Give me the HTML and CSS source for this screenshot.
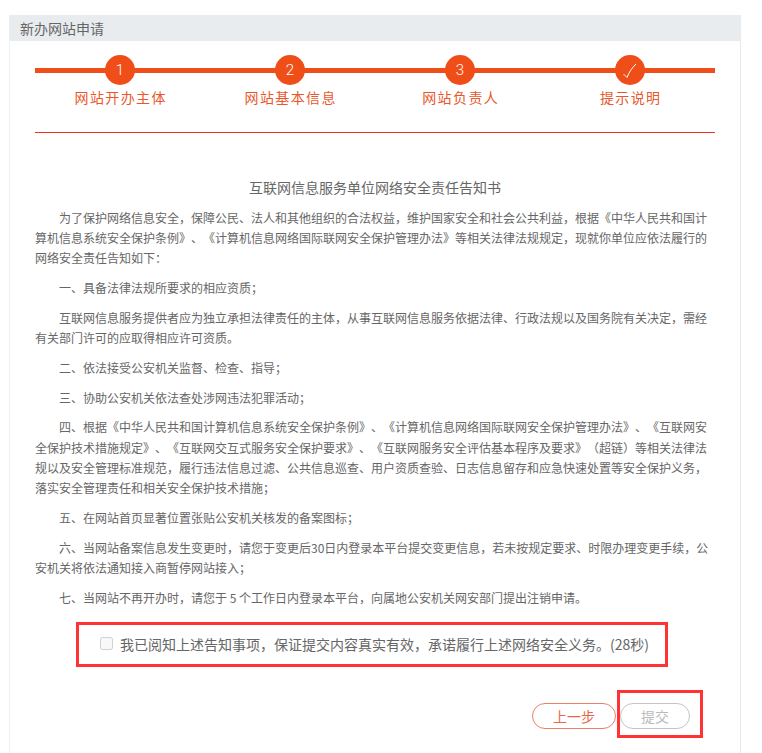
FILE: index.html
```html
<!DOCTYPE html>
<html lang="zh-CN">

<head>
    <meta charset="UTF-8">
    <title>新办网站申请</title>
    <link rel="stylesheet" href="styles.css">
</head>

<body>

    <div class="panel">
        <div class="panel-head">新办网站申请</div>
        <div class="panel-body">
            <div class="steps">
                <div class="step">
                    <span class="step-num">1</span>
                    <span class="step-label">网站开办主体</span>
                </div>
                <div class="step">
                    <span class="step-num">2</span>
                    <span class="step-label">网站基本信息</span>
                </div>
                <div class="step">
                    <span class="step-num">3</span>
                    <span class="step-label">网站负责人</span>
                </div>
                <div class="step">
                    <span class="step-num">
                        <svg width="30" height="30" viewBox="0 0 30 30" fill="none" stroke="#fff" stroke-width="1">
                            <path d="M8.5 19 L12 22.5 C14 17 17 13 21 9" />
                        </svg>
                    </span>
                    <span class="step-label">提示说明</span>
                </div>
            </div>

            <h3 class="notice-title">互联网信息服务单位网络安全责任告知书</h3>
            <div class="notice">
                <p>为了保护网络信息安全，保障公民、法人和其他组织的合法权益，维护国家安全和社会公共利益，根据《中华人民共和国计算机信息系统安全保护条例》、《计算机信息网络国际联网安全保护管理办法》等相关法律法规规定，现就你单位应依法履行的网络安全责任告知如下：</p>
                <p>一、具备法律法规所要求的相应资质；</p>
                <p>互联网信息服务提供者应为独立承担法律责任的主体，从事互联网信息服务依据法律、行政法规以及国务院有关决定，需经有关部门许可的应取得相应许可资质。</p>
                <p>二、依法接受公安机关监督、检查、指导；</p>
                <p>三、协助公安机关依法查处涉网违法犯罪活动；</p>
                <p>四、根据《中华人民共和国计算机信息系统安全保护条例》、《计算机信息网络国际联网安全保护管理办法》、《互联网安全保护技术措施规定》、《互联网交互式服务安全保护要求》、《互联网服务安全评估基本程序及要求》（超链）等相关法律法规以及安全管理标准规范，履行违法信息过滤、公共信息巡查、用户资质查验、日志信息留存和应急快速处置等安全保护义务，落实安全管理责任和相关安全保护技术措施；</p>
                <p>五、在网站首页显著位置张贴公安机关核发的备案图标；</p>
                <p>六、当网站备案信息发生变更时，请您于变更后30日内登录本平台提交变更信息，若未按规定要求、时限办理变更手续，公安机关将依法通知接入商暂停网站接入；</p>
                <p>七、当网站不再开办时，请您于 5 个工作日内登录本平台，向属地公安机关网安部门提出注销申请。</p>
            </div>

            <label class="agree">
                <input type="checkbox" disabled>
                <span>我已阅知上述告知事项，保证提交内容真实有效，承诺履行上述网络安全义务。(28秒)</span>
            </label>

            <div class="actions">
                <button type="button" class="btn btn-prev">上一步</button>
                <button type="button" class="btn btn-submit" disabled>提交</button>
                <div class="mark"></div>
            </div>
        </div>
    </div>

</body>

</html>
```

FILE: styles.css
```css
* {
    box-sizing: border-box;
}

body {
    margin: 0;
    background: #fff;
    font-family: "Noto Sans CJK SC", "Liberation Sans", sans-serif;
    color: #666;
    text-spacing-trim: space-all;
}

.panel {
    width: 732px;
    height: 738px;
    margin: 15px 0 0 9px;
    border-left: 1px solid #eef0f2;
    border-right: 1px solid #e6e9ec;
}

.panel-head {
    height: 26px;
    margin: 0 -1px;
    padding-left: 11px;
    background: #e8ecef;
    font-size: 14px;
    line-height: 27px;
    color: #666;
}

.panel-body {
    padding: 0 25px;
}

.steps {
    position: relative;
    display: grid;
    grid-template-columns: repeat(4, 170px);
    padding: 14px 0 25px;
    border-bottom: 1px solid #f0341c;
}

.steps::before {
    content: "";
    position: absolute;
    left: 0;
    right: 0;
    top: 27px;
    height: 5px;
    background: #f04e18;
}

.step {
    position: relative;
    display: flex;
    flex-direction: column;
    align-items: center;
}

.step-num {
    display: flex;
    justify-content: center;
    align-items: center;
    width: 30px;
    height: 30px;
    border-radius: 50%;
    background: #f04e18;
    color: #fff;
    font-family: Roboto, sans-serif;
    font-size: 15px;
    font-weight: 300;
}

.step-label {
    margin-top: 2px;
    padding-left: 1.4px;
    font-size: 14px;
    line-height: 20px;
    letter-spacing: 1.4px;
    color: #e8582c;
}

.notice-title {
    margin: 44px 0 0;
    font-size: 14px;
    font-weight: normal;
    line-height: 20px;
    text-align: center;
}

.notice {
    margin-top: 10.5px;
    font-size: 12px;
    line-height: 20.4px;
}

.notice p {
    margin: 0 0 9.3px;
    text-indent: 24px;
}

.agree {
    display: flex;
    align-items: center;
    width: 592px;
    height: 45px;
    margin: 14px 0 0 41px;
    padding: 0 0 2px 21px;
    border: 3px solid #f33;
    font-size: 14px;
}

.agree input {
    width: 13px;
    height: 13px;
    margin: 0 7px 0 0;
}

.actions {
    position: relative;
    display: flex;
    gap: 4px;
    margin: 36px 0 0 497px;
}

.btn {
    height: 26px;
    padding: 0;
    background: #fff;
    border-radius: 13px;
    font-family: inherit;
    font-size: 14px;
    line-height: 24px;
}

.btn-prev {
    width: 84px;
    border: 1px solid #e8806a;
    color: #e8674a;
}

.btn-submit {
    width: 70px;
    border: 1px solid #c4c4c4;
    color: #bbb;
}

.mark {
    position: absolute;
    left: 85px;
    top: -13px;
    width: 86px;
    height: 48px;
    border: 3px solid #f33;
}
```
